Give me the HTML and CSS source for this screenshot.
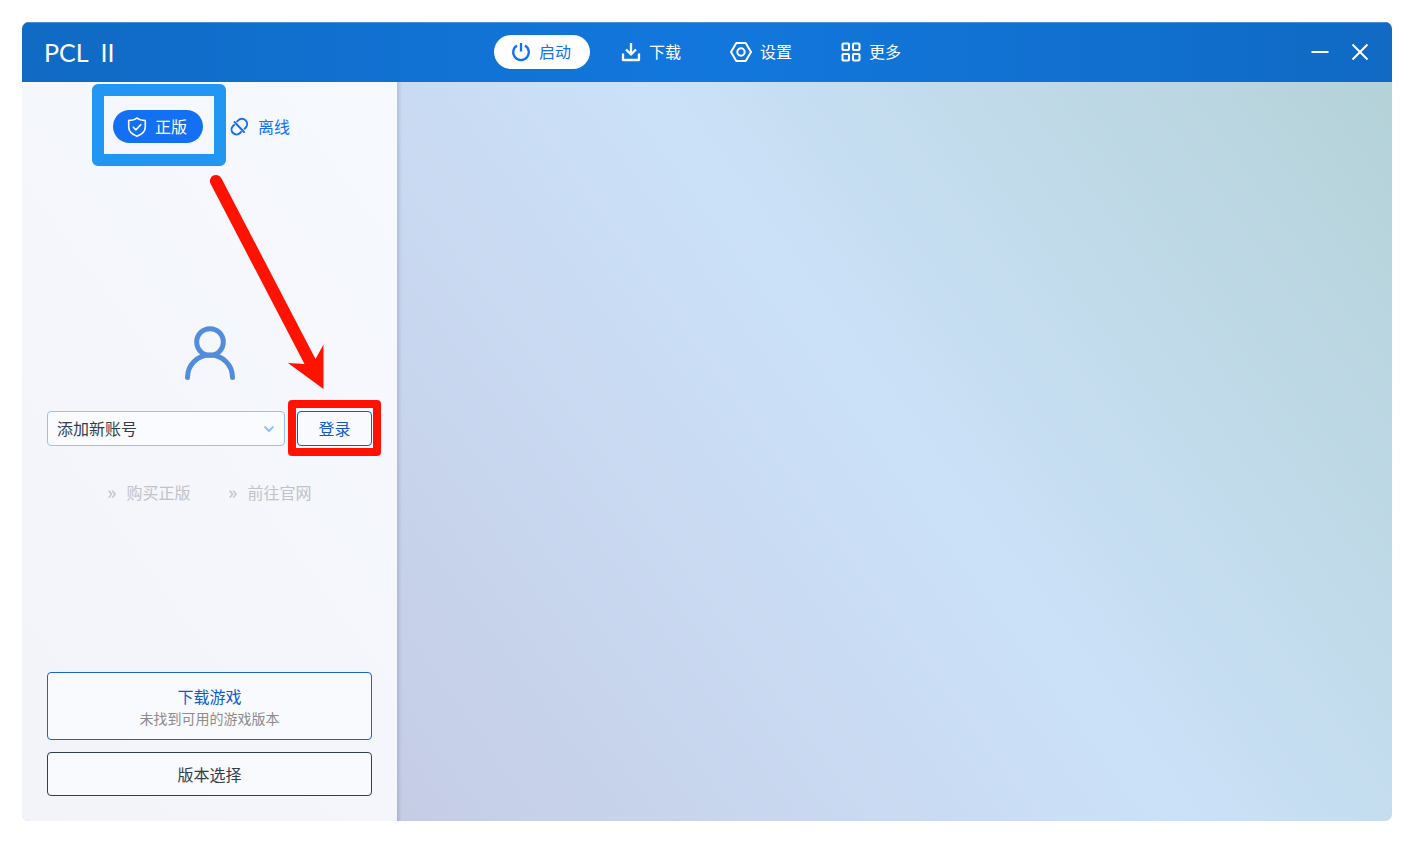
FILE: index.html
```html
<!DOCTYPE html>
<html lang="zh-CN">
<head>
<meta charset="utf-8">
<title>PCL II</title>
<link rel="stylesheet" href="styles.css">
</head>
<body>
<div class="window">
  <header class="titlebar">
    <h1 class="logo"><span>PCL</span> <span>II</span></h1>
    <nav class="nav">
      <button class="nav-item active" type="button">
        <svg class="icon" viewBox="0 0 20 20"><path d="M6 3.600a7.800 7.800 0 1 0 8 0M10 1v8.500" stroke-width="2.300"/></svg>
        <span class="label">启动</span>
      </button>
      <button class="nav-item" type="button">
        <svg class="icon" viewBox="0 0 20 20"><path d="M10 1v11M5 7.500l5 5 5-5M2 11.500V18h16v-6.500" stroke-width="2.300" stroke-linejoin="round"/></svg>
        <span class="label">下载</span>
      </button>
      <button class="nav-item" type="button">
        <svg class="icon icon-wide" viewBox="0 0 22 20"><path d="M6.300 1h9.400L21 10l-5.300 9H6.300L1 10z" stroke-width="2" stroke-linejoin="round"/><circle cx="11" cy="10" r="3.700" stroke-width="2"/></svg>
        <span class="label">设置</span>
      </button>
      <button class="nav-item" type="button">
        <svg class="icon" viewBox="0 0 20 20"><g stroke-width="2.100"><rect x="1.500" y="1.500" width="6.500" height="6.500" rx="1"/><rect x="12" y="1.500" width="6.500" height="6.500" rx="1"/><rect x="1.500" y="12" width="6.500" height="6.500" rx="1"/><rect x="12" y="12" width="6.500" height="6.500" rx="1"/></g></svg>
        <span class="label">更多</span>
      </button>
    </nav>
    <div class="controls">
      <button class="control" type="button" aria-label="最小化"><svg class="icon" viewBox="0 0 20 20"><path d="M1.500 10h17" stroke-width="2"/></svg></button>
      <button class="control" type="button" aria-label="关闭"><svg class="icon" viewBox="0 0 20 20"><path d="M2.500 2.500l15 15M17.500 2.500l-15 15" stroke-width="2"/></svg></button>
    </div>
  </header>
  <div class="content">
    <aside class="sidebar">
      <div class="tabs">
        <button class="tab active" type="button">
          <svg class="icon" viewBox="0 0 20 20"><path d="M10 1C8 2.700 5 3.500 1.700 3.500V10c0 4.500 3.300 7.300 8.300 9.200 5-1.900 8.300-4.700 8.300-9.200V3.500C15 3.500 12 2.700 10 1zM5.800 9.800l3.100 3 5.300-5.500" stroke-width="1.600"/></svg>
          <span class="label">正版</span>
          <span class="frame frame-blue"></span>
        </button>
        <button class="tab" type="button">
          <svg class="icon" viewBox="0 0 20 20"><path d="M7.200 4.400l1-1a5.200 5.200 0 0 1 7.400 0 5.200 5.200 0 0 1 0 7.300l-1 1M11 15l-1 1a5 5 0 0 1-7 0 5 5 0 0 1 0-7l1-1M4.500 5l9.500 10" stroke-width="2" stroke-linecap="round"/></svg>
          <span class="label">离线</span>
        </button>
      </div>
      <form class="login">
        <svg class="avatar" viewBox="0 0 56 56"><circle cx="28" cy="17" r="13.300"/><path d="M5.500 52.500a22.500 22.500 0 0 1 45 0"/></svg>
        <div class="account">
          <div class="select-wrap">
            <select class="select" aria-label="账号"><option>添加新账号</option></select>
            <svg class="chevron" viewBox="0 0 12 8"><path d="M1.500 1.500L6 6l4.500-4.500"/></svg>
          </div>
          <button class="button login-button" type="button">登录<span class="frame frame-red"></span></button>
        </div>
        <div class="links">
          <a class="link" href="#"><span class="mark">»</span>购买正版</a>
          <a class="link" href="#"><span class="mark">»</span>前往官网</a>
        </div>
      </form>
      <div class="actions">
        <button class="button download" type="button"><span>下载游戏</span><small class="hint">未找到可用的游戏版本</small></button>
        <button class="button versions" type="button">版本选择</button>
      </div>
      <svg class="arrow" viewBox="0 0 120 218"><path d="M2.600 10.800A6 6 0 0 1 13.400 5.200L107.500 186l8-14.500V216L80 190l16.500 1z"/></svg>
    </aside>
    <main class="page"></main>
  </div>
</div>
</body>
</html>
```
FILE: styles.css
```css
* { box-sizing: border-box; }

body {
  margin: 0;
  min-height: 100vh;
  padding: 22px 23px 23px 22px;
  display: flex;
  background: #fff;
  color: #343d4a;
  font: 400 16px/24px "Noto Sans CJK SC", sans-serif;
}

button, select {
  font: inherit;
  color: inherit;
  margin: 0;
  padding: 0;
  border: 0;
  background: none;
}

.window {
  flex: 1;
  display: flex;
  flex-direction: column;
  border-radius: 7px;
  overflow: hidden;
  background: linear-gradient(54deg, #c2c3dc 0%, #cbe1f8 59%, #b4d2d8 98%);
}

.titlebar {
  height: 60px;
  padding: 0 22px;
  display: grid;
  grid-template-columns: 1fr auto 1fr;
  align-items: center;
  color: #fff;
  background: linear-gradient(90deg, #106ac4, #1277dd 50%, #106ac4);
  box-shadow: inset 0 1px #4a90d6;
}

.logo {
  margin: 0;
  display: flex;
  gap: 12px;
  font: 400 25px/32px Lato, sans-serif;
}

.nav { display: flex; gap: 14px; }

.nav-item, .tab {
  display: flex;
  align-items: center;
  justify-content: center;
  gap: 8px;
}

.label { padding: 0 2px 2px 0; }

.nav-item {
  width: 96px;
  height: 34px;
  border-radius: 17px;
}

.nav-item.active { background: #fff; color: #1370f3; }

.icon {
  display: block;
  width: 20px;
  height: 20px;
  flex: none;
  fill: none;
  stroke: currentColor;
}

.icon-wide { width: 22px; }

.controls {
  display: flex;
  justify-content: flex-end;
  margin-right: -10px;
}

.control {
  width: 40px;
  height: 40px;
  display: grid;
  place-items: center;
}

.content { flex: 1; display: flex; }

.sidebar {
  position: relative;
  width: 375px;
  padding: 28px 25px 25px;
  display: flex;
  flex-direction: column;
  background: linear-gradient(54deg, #f3f4fa, #f6f9fd);
}

.page {
  flex: 1;
  background: linear-gradient(90deg, rgba(70, 90, 140, 0.2), rgba(70, 90, 140, 0) 5px);
}

.tabs { display: flex; justify-content: center; gap: 13px; }

.tab {
  position: relative;
  width: 90px;
  height: 33px;
  border-radius: 17px;
  color: #1370f3;
}

.tab.active { background: #1370f3; color: #fff; }

.frame { position: absolute; pointer-events: none; }

.frame-blue {
  inset: -26px -23px -23px -21px;
  border: 12px solid #2196f3;
  border-radius: 6px;
}

.frame-red {
  inset: -12px -10px -11px;
  border: 8px solid #ff1200;
  border-radius: 4px;
}

.login {
  flex: 1;
  padding-top: 14px;
  display: flex;
  flex-direction: column;
  justify-content: center;
}

.avatar {
  width: 56px;
  height: 56px;
  margin: 0 auto 30px;
  fill: none;
  stroke: #528ddb;
  stroke-width: 5;
  stroke-linecap: round;
}

.account { display: flex; gap: 12px; margin-bottom: 34px; }

.select-wrap { position: relative; flex: 1; }

.select {
  appearance: none;
  width: 100%;
  height: 35px;
  padding: 0 28px 2px 9px;
  border: 1px solid #96c0f9;
  border-radius: 4px;
  background: #f9fbfe;
}

.chevron {
  position: absolute;
  right: 10px;
  top: 14px;
  width: 12px;
  height: 8px;
  fill: none;
  stroke: #96c0f9;
  stroke-width: 2;
  pointer-events: none;
}

.button {
  border: 1px solid #343d4a;
  border-radius: 4px;
  background: #f9fafe;
}

.login-button {
  position: relative;
  width: 75px;
  height: 35px;
  padding-bottom: 2px;
  border-color: #0f5bcb;
  color: #0f5bcb;
}

.links { display: flex; justify-content: center; gap: 38px; }

.link {
  display: flex;
  gap: 10px;
  color: #c0c2c9;
  text-decoration: none;
}

.mark { font-family: "Open Sans", sans-serif; font-size: 18px; }

.actions { display: flex; flex-direction: column; gap: 12px; }

.download {
  height: 68px;
  display: flex;
  flex-direction: column;
  align-items: center;
  justify-content: center;
  border-color: #1763cf;
  color: #0f5bcb;
}

.hint { font-size: 14px; line-height: 20px; color: #8c8c8c; }

.versions { height: 44px; }

.arrow {
  position: absolute;
  left: 186px;
  top: 91px;
  width: 120px;
  height: 218px;
  fill: #ff1200;
  pointer-events: none;
}
```
